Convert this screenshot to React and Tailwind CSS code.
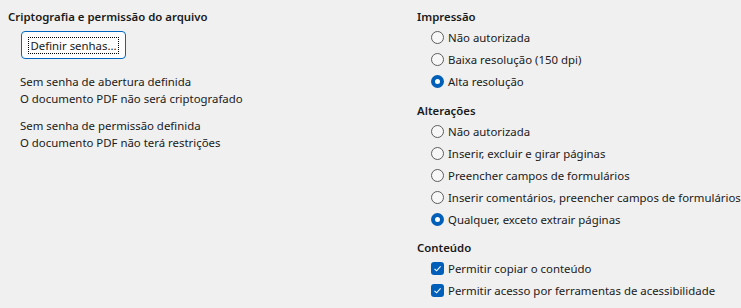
import React, { useState } from "react";

function Radio({ label, checked, onClick }) {
  return (
    <label onClick={onClick} className="flex items-center h-[22px] gap-[4px] cursor-default whitespace-nowrap">
      {checked ? (
        <span className="w-[13px] h-[13px] shrink-0 rounded-full bg-[#005fb8] flex items-center justify-center">
          <span className="w-[5px] h-[5px] rounded-full bg-white" />
        </span>
      ) : (
        <span className="w-[13px] h-[13px] shrink-0 rounded-full border border-[#5d5d5d] bg-[#f7f7f7]" />
      )}
      <span>{label}</span>
    </label>
  );
}

function Check({ label, checked }) {
  return (
    <label className="flex items-center h-[22px] gap-[4px] whitespace-nowrap">
      <span className="w-[13px] h-[13px] shrink-0 rounded-[3px] bg-[#005fb8] flex items-center justify-center">
        {checked && (
          <svg width="9" height="9" viewBox="0 0 9 9">
            <path d="M1.5 4.8 L3.6 6.8 L7.6 2.3" fill="none" stroke="white" strokeWidth="1.1" />
          </svg>
        )}
      </span>
      <span>{label}</span>
    </label>
  );
}

export default function App() {
  const [print, setPrint] = useState(2);
  const [changes, setChanges] = useState(4);

  const printOpts = ["Não autorizada", "Baixa resolução (150 dpi)", "Alta resolução"];
  const changeOpts = [
    "Não autorizada",
    "Inserir, excluir e girar páginas",
    "Preencher campos de formulários",
    "Inserir comentários, preencher campos de formulários",
    "Qualquer, exceto extrair páginas",
  ];

  return (
    <div className="w-[741px] h-[308px] bg-[#f0f0f0] text-[#1a1a1a] text-[11.4px] leading-[17px] flex" style={{ fontFamily: '"Noto Sans", sans-serif' }}>
      {/* LEFT */}
      <div className="w-[409px] pl-[8px] pt-[8px]">
        <h2 className="font-semibold">Criptografia e permissão do arquivo</h2>
        <button className="mt-[6px] ml-[13px] w-[105px] h-[28px] rounded-[4px] border border-[#0067c0] bg-[#fdfdfd] flex items-center justify-center">
          <span className="border border-dotted border-black px-[1px] leading-[15px]">Definir senhas...</span>
        </button>
        <div className="mt-[14px] ml-[12px]">
          <p>Sem senha de abertura definida</p>
          <p>O documento PDF não será criptografado</p>
        </div>
        <div className="mt-[10px] ml-[12px]">
          <p>Sem senha de permissão definida</p>
          <p>O documento PDF não terá restrições</p>
        </div>
      </div>

      {/* RIGHT */}
      <div className="flex-1 pt-[8px] pl-[8px]">
        <h2 className="font-semibold">Impressão</h2>
        <div className="ml-[14px] mt-[1px]">
          {printOpts.map((o, i) => (
            <Radio key={i} label={o} checked={print === i} onClick={() => setPrint(i)} />
          ))}
        </div>
        <h2 className="font-semibold mt-[10px]">Alterações</h2>
        <div className="ml-[14px] mt-[1px]">
          {changeOpts.map((o, i) => (
            <Radio key={i} label={o} checked={changes === i} onClick={() => setChanges(i)} />
          ))}
        </div>
        <h2 className="font-semibold mt-[9px]">Conteúdo</h2>
        <div className="ml-[14px] mt-[1px]">
          <Check label="Permitir copiar o conteúdo" checked />
          <Check label="Permitir acesso por ferramentas de acessibilidade" checked />
        </div>
      </div>
    </div>
  );
}
